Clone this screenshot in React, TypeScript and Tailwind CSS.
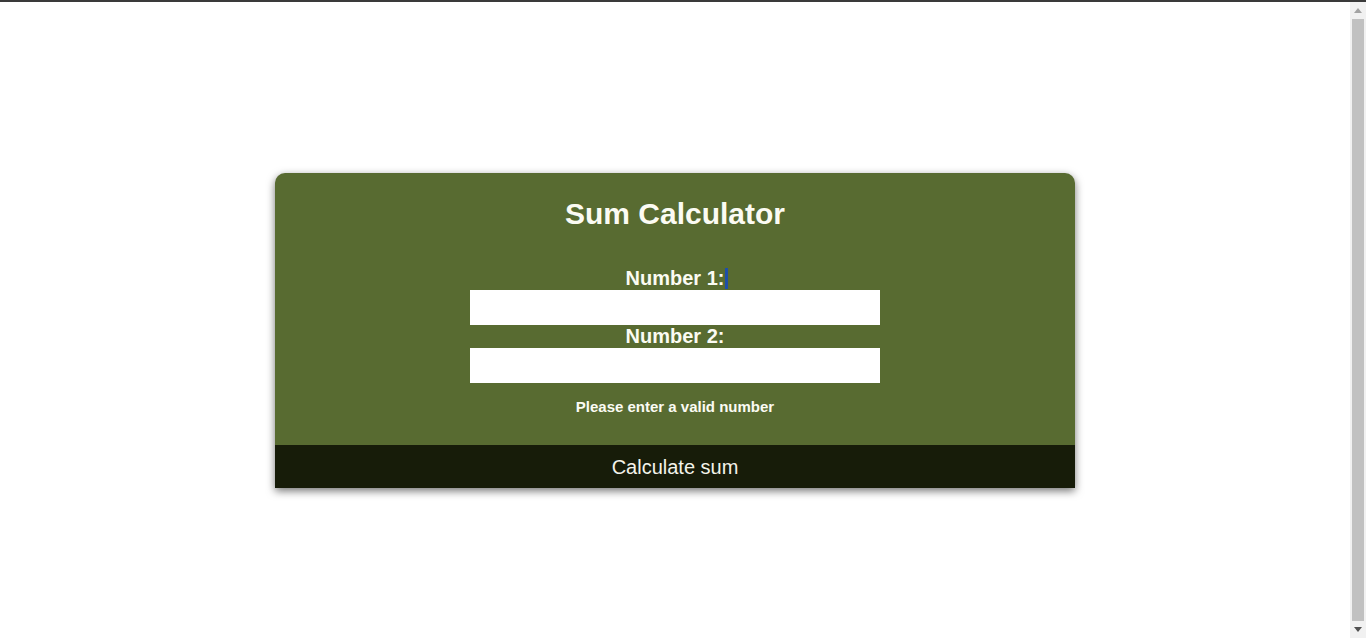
import React from 'react';

const Scrollbar = () => {
  return (
    <div className="flex h-full w-[16px] shrink-0 flex-col items-center bg-[#f1f1f1]">
      <div className="flex h-[17px] w-full items-center justify-center">
        <svg width="8" height="5" viewBox="0 0 8 5">
          <path d="M0 5 L4 0 L8 5 Z" fill="#a3a3a3" />
        </svg>
      </div>
      <div className="w-[12px] flex-1 bg-[#c1c1c1]" />
      <div className="flex h-[17px] w-full items-center justify-center">
        <svg width="8" height="5" viewBox="0 0 8 5">
          <path d="M0 0 L8 0 L4 5 Z" fill="#505050" />
        </svg>
      </div>
    </div>
  );
};

const App = () => {
  return (
    <div className="flex h-[638px] w-full flex-col overflow-hidden bg-white font-['Liberation_Sans',Arial,sans-serif]">
      <div className="h-[2px] w-full bg-[#3a3a3a]" />
      <div className="flex min-h-0 flex-1">
        <div className="flex-1 pt-[171px]">
          <div className="mx-auto w-[800px] overflow-hidden rounded-t-[10px] bg-[#586b31] shadow-[0_3px_8px_rgba(0,0,0,0.55)]">
            <h1 className="pt-6 text-center text-[30px] font-bold leading-[34px] text-[#fbfbf3]">
              Sum Calculator
            </h1>
            <form className="mt-9 flex flex-col items-center" onSubmit={(e) => e.preventDefault()}>
              <label className="relative text-[20px] font-bold leading-[23px] text-[#fbfbf3]">
                Number 1:
                <span className="absolute left-full top-[1px] ml-[1px] h-[21px] w-[3px] bg-[#1f4fa8]" />
              </label>
              <input type="text" className="h-[35px] w-[410px] bg-white outline-none" />
              <label className="text-[20px] font-bold leading-[23px] text-[#fbfbf3]">
                Number 2:
              </label>
              <input type="text" className="h-[35px] w-[410px] bg-white outline-none" />
              <p className="mt-[15px] text-[15px] font-bold leading-[18px] text-[#fbfbf3]">
                Please enter a valid number
              </p>
              <button
                type="submit"
                className="mt-[29px] h-[43px] w-full bg-[#171c09] text-[20px] text-[#f3f3ea]"
              >
                Calculate sum
              </button>
            </form>
          </div>
        </div>
        <Scrollbar />
      </div>
    </div>
  );
};

export default App;
